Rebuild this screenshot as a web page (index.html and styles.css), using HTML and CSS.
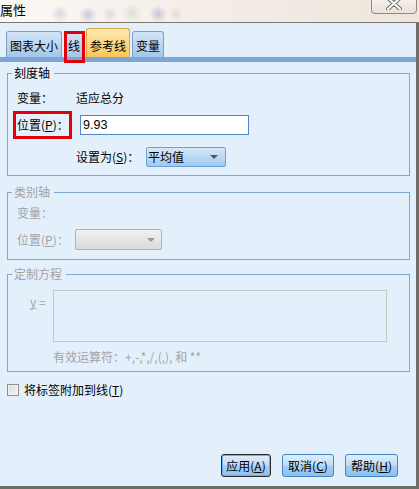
FILE: index.html
```html
<!DOCTYPE html>
<html lang="zh">
<head>
<meta charset="utf-8">
<title>属性</title>
<link rel="stylesheet" href="styles.css">
</head>
<body>
<div class="window">
  <div class="titlebar">
    <span class="title">属性</span>
    <div class="close">
      <svg width="16" height="10" viewBox="0 0 16 10"><path d="M2 -2 L14 9 M14 -2 L2 9" stroke="#6d6d6d" stroke-width="4" stroke-linecap="round"/><path d="M2 -2 L14 9 M14 -2 L2 9" stroke="#ffffff" stroke-width="2" stroke-linecap="round"/></svg>
    </div>
  </div>
  <div class="main">
    <div class="tabbar">
      <div class="tab">图表大小</div>
      <div class="tab marked">线</div>
      <div class="tab active">参考线</div>
      <div class="tab">变量</div>
    </div>
    <div class="tabline"></div>
    <div class="content">
      <div class="group g1">
        <div class="legend">刻度轴</div>
        <div class="row r1"><span class="lbl w59">变量<span class="colon">：</span></span><span>适应总分</span></div>
        <div class="row r2"><span class="lbl pos">位置(<u>P</u>)<span class="colon">：</span></span><div class="input">9.93</div></div>
        <div class="row r3"><span class="lbl set">设置为(<u>S</u>)<span class="colon">：</span></span><div class="select"><span>平均值</span><span class="arrow"></span></div></div>
      </div>
      <div class="group g2 disabled">
        <div class="legend">类别轴</div>
        <div class="row r1b"><span class="lbl">变量<span class="colon">：</span></span></div>
        <div class="row r2b"><span class="lbl w58">位置(<u>P</u>)<span class="colon">：</span></span><div class="select dis"><span></span><span class="arrow"></span></div></div>
      </div>
      <div class="group g3 disabled">
        <div class="legend">定制方程</div>
        <div class="row r1c"><span class="ylbl"><u>y</u> =</span><div class="textarea"></div></div>
        <div class="row r2c"><span>有效运算符<span class="colon">：</span>+,-,*,/,(,), 和 **</span></div>
      </div>
      <div class="checkrow"><span class="checkbox"></span><span>将标签附加到线(<u>T</u>)</span></div>
      <div class="buttons">
        <div class="btn default b1">应用(<u>A</u>)</div>
        <div class="btn b2">取消(<u>C</u>)</div>
        <div class="btn b3">帮助(<u>H</u>)</div>
      </div>
    </div>
  </div>
</div>
</body>
</html>
```

FILE: styles.css
```css
html, body {
  margin: 0;
  padding: 0;
}
body {
  width: 419px;
  height: 489px;
  overflow: hidden;
  font-family: "Noto Sans CJK SC", "Noto Sans", sans-serif;
  font-size: 12px;
  color: #000;
  background: #e3effa;
}
.window {
  display: flex;
  flex-direction: column;
  height: 489px;
}
.titlebar {
  position: relative;
  height: 22px;
  border-bottom: 1px solid #7a7670;
  background:
    radial-gradient(circle 9px at 60px 14px, rgba(150,150,190,0.30), transparent),
    radial-gradient(circle 9px at 88px 15px, rgba(120,120,200,0.35), transparent),
    radial-gradient(circle 8px at 110px 14px, rgba(150,150,180,0.25), transparent),
    radial-gradient(circle 10px at 132px 13px, rgba(170,160,160,0.25), transparent),
    radial-gradient(circle 9px at 158px 14px, rgba(130,110,200,0.35), transparent),
    radial-gradient(circle 7px at 176px 14px, rgba(180,170,160,0.25), transparent),
    linear-gradient(90deg, #fbf8f5 0%, #f4ede6 50%, #efe5dc 100%);
}
.title {
  display: block;
  font-size: 13px;
  line-height: 20px;
  padding-left: 0;
}
.close {
  position: absolute;
  right: 2px;
  top: -1px;
  width: 44px;
  height: 13px;
  border: 1px solid #8d8983;
  border-radius: 0 0 4px 4px;
  background: linear-gradient(#f6f0ea, #eae0d6);
  display: flex;
  justify-content: center;
  align-items: flex-start;
}
.close svg {
  display: block;
  margin-top: 0;
}
.main {
  flex: 1;
  display: flex;
  flex-direction: column;
  background: #e3effa;
  border-right: 3px solid #6f6b66;
  border-bottom: 3px solid #6f6b66;
  min-height: 0;
}
.tabbar {
  display: flex;
  align-items: flex-end;
  gap: 2px;
  height: 29px;
  margin-top: 5px;
  padding-left: 6px;
}
.tab {
  position: relative;
  box-sizing: border-box;
  height: 26px;
  padding: 0 3px 3px 3px;
  line-height: 16px;
  border: 1px solid #7f9fc4;
  border-bottom: none;
  border-radius: 3px 3px 0 0;
  background: linear-gradient(#d3e5f7, #a3c6ea);
  display: flex;
  align-items: flex-end;
}
.tab.active {
  height: 29px;
  border-color: #d9a640;
  background: linear-gradient(#fde9b2, #f9c65c);
}
.tab.marked::after {
  content: "";
  position: absolute;
  left: -1px;
  right: -2px;
  top: -1px;
  bottom: -6px;
  border: 3px solid #e4000a;
}
.tabline {
  height: 5px;
  background: #7ba6d5;
}
.content {
  flex: 1;
  display: flex;
  flex-direction: column;
  padding: 11px 6px 9px 7px;
}
.group {
  border: 1px solid #7fa8d3;
  display: flex;
  flex-direction: column;
  padding: 0 0 8px 9px;
}
.legend {
  align-self: flex-start;
  margin: -9px 0 0 -5px;
  padding: 0 4px 0 2px;
  line-height: 16px;
  background: #e3effa;
}
.row {
  display: flex;
  align-items: center;
  line-height: 16px;
}
.lbl {
  display: block;
}
.colon {
  font-family: "Noto Sans CJK TC", "Noto Sans CJK SC", sans-serif;
}
.w59 { width: 59px; }
.w58 { width: 58px; }
.r1 { margin-top: 9px; }
.r2 { margin-top: 9px; height: 20px; }
.r3 { margin-top: 12px; height: 20px; padding-left: 59px; }
.pos {
  position: relative;
  width: 52px;
}
.pos::after {
  content: "";
  position: absolute;
  left: -4px;
  right: -3px;
  top: -6px;
  bottom: -6px;
  border: 3px solid #e4000a;
}
.input {
  box-sizing: border-box;
  margin-left: 11px;
  width: 169px;
  height: 20px;
  border: 1px solid #4d88c8;
  background: #fff;
  padding-left: 2px;
  font-family: "Liberation Sans", "DejaVu Sans", sans-serif;
  font-size: 12.5px;
  line-height: 18px;
}
.set { width: 70px; }
.select {
  box-sizing: border-box;
  width: 80px;
  height: 20px;
  border: 1px solid #6ca0d6;
  border-radius: 2px;
  background: linear-gradient(#d5e8fa, #a2c9ef);
  display: flex;
  align-items: center;
  justify-content: space-between;
  padding: 0 7px 0 1px;
  line-height: 16px;
}
.arrow {
  width: 0;
  height: 0;
  border-left: 4px solid transparent;
  border-right: 4px solid transparent;
  border-top: 4px solid #555;
}
.select.dis {
  width: 87px;
  height: 21px;
  border-color: #b1b1b1;
  background: linear-gradient(#f1f1f1, #dadada);
  padding-right: 6px;
}
.select.dis .arrow {
  border-top-color: #9a9a9a;
}
.disabled {
  color: #a3a3a3;
}
.g2 { margin-top: 16px; padding-bottom: 9px; }
.r1b { margin-top: 5px; }
.r2b { margin-top: 8px; height: 21px; }
.g3 { margin-top: 14px; padding-bottom: 6px; }
.r1c {
  margin-top: 8px;
  align-items: flex-start;
  padding-left: 13px;
}
.ylbl {
  width: 23px;
  margin-top: 4px;
}
.textarea {
  box-sizing: border-box;
  width: 334px;
  height: 52px;
  border: 1px solid #c6c6c6;
}
.r2c {
  margin-top: 7px;
  padding-left: 36px;
}
.checkrow {
  margin-top: 10px;
  display: flex;
  align-items: center;
  gap: 5px;
  line-height: 16px;
}
.checkbox {
  box-sizing: border-box;
  width: 12px;
  height: 12px;
  border: 1px solid #8e8f8f;
  background: linear-gradient(135deg, #d8d8d8, #f6f6f6);
  box-shadow: inset 0 0 0 1px #f4f4f4;
}
.buttons {
  margin-top: auto;
  display: flex;
  justify-content: flex-end;
  gap: 11px;
  padding-right: 12px;
}
.btn {
  box-sizing: border-box;
  height: 23px;
  border: 1px solid #3c86c9;
  border-radius: 3px;
  background: linear-gradient(#e0eefb 0%, #c4def6 45%, #a4cdf2 55%, #8fc0ee 100%);
  display: flex;
  align-items: center;
  justify-content: center;
  line-height: 16px;
}
.btn.default {
  border-color: #2a2a2a;
  box-shadow: inset 0 0 0 1px #6fb0e8;
}
.b1 { width: 50px; }
.b2 { width: 52px; }
.b3 { width: 53px; }
```
